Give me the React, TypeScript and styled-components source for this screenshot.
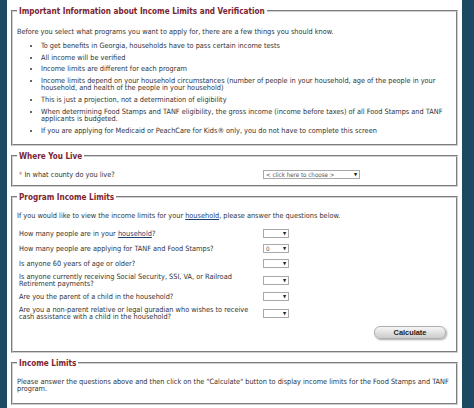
import React from 'react';
import styled, { createGlobalStyle } from 'styled-components';

const GlobalStyle = createGlobalStyle`
  html, body {
    margin: 0;
    padding: 0;
    background: #1d4a63;
  }
  body {
    font-family: "DejaVu Sans Condensed", "DejaVu Sans", sans-serif;
  }
`;

const bullets: string[] = [
  'To get benefits in Georgia, households have to pass certain income tests',
  'All income will be verified',
  'Income limits are different for each program',
  'Income limits depend on your household circumstances (number of people in your household, age of the people in your household, and health of the people in your household)',
  'This is just a projection, not a determination of eligibility',
  'When determining Food Stamps and TANF eligibility, the gross income (income before taxes) of all Food Stamps and TANF applicants is budgeted.',
  'If you are applying for Medicaid or PeachCare for Kids® only, you do not have to complete this screen',
];

interface Question {
  label: React.ReactNode;
  value?: string;
}

const App: React.FC = () => {
  const questions: Question[] = [
    { label: <>How many people are in your <Link>household</Link>?</> },
    { label: 'How many people are applying for TANF and Food Stamps?', value: '0' },
    { label: 'Is anyone 60 years of age or older?' },
    { label: 'Is anyone currently receiving Social Security, SSI, VA, or Railroad Retirement payments?' },
    { label: 'Are you the parent of a child in the household?' },
    { label: 'Are you a non-parent relative or legal guradian who wishes to receive cash assistance with a child in the household?' },
  ];

  return (
    <>
      <GlobalStyle />
      <Page>
        <Content>
          <Section $paddingBottom={5.5}>
            <Legend>Important Information about Income Limits and Verification</Legend>
            <Paragraph $top={12}>
              Before you select what programs you want to apply for, there are a few things you should know.
            </Paragraph>
            <BulletList>
              {bullets.map((b) => (
                <li key={b}>{b}</li>
              ))}
            </BulletList>
          </Section>

          <Section $paddingBottom={6}>
            <Legend>Where You Live</Legend>
            <CountyRow>
              <Label>
                <Required>*</Required> In what county do you live?
              </Label>
              <SelectBox $width={97}>
                <SelectValue>&lt; click here to choose &gt;</SelectValue>
                <Arrow>▼</Arrow>
              </SelectBox>
            </CountyRow>
          </Section>

          <Section $paddingBottom={12}>
            <Legend>Program Income Limits</Legend>
            <Paragraph $top={10}>
              If you would like to view the income limits for your <Link>household</Link>, please answer the questions below.
            </Paragraph>
            <QuestionGrid>
              {questions.map((q, i) => (
                <React.Fragment key={i}>
                  <Label>{q.label}</Label>
                  <SelectBox $width={26}>
                    <SelectValue>{q.value ?? ''}</SelectValue>
                    <Arrow>▼</Arrow>
                  </SelectBox>
                </React.Fragment>
              ))}
            </QuestionGrid>
            <ButtonRow>
              <CalcButton type="button">Calculate</CalcButton>
            </ButtonRow>
          </Section>

          <Section $paddingBottom={10}>
            <Legend>Income Limits</Legend>
            <Paragraph $top={10}>
              Please answer the questions above and then click on the "Calculate" button to display income limits for the Food Stamps and TANF program.
            </Paragraph>
          </Section>
        </Content>
      </Page>
    </>
  );
};

const Page = styled.div`
  display: flex;
  height: 408px;
  padding: 0 12px 0 7px;
  background: #1d4a63;
  overflow: hidden;
`;

const Content = styled.div`
  flex: 1;
  background: #ffffff;
  padding: 6px 4px 0;
  display: flex;
  flex-direction: column;
  gap: 5px;
`;

const Section = styled.fieldset<{ $paddingBottom: number }>`
  margin: 0;
  min-width: 0;
  border: 2px groove #d0d0d0;
  padding: 0 4px ${(p) => p.$paddingBottom}px 4px;
  color: #333333;
  font-size: 7.3px;
  line-height: 7.6px;
`;

const Legend = styled.legend`
  padding: 0 2px;
  margin-left: 0;
  font-family: "DejaVu Sans Condensed", "DejaVu Sans", sans-serif;
  font-weight: bold;
  font-size: 8.1px;
  line-height: 10px;
  color: #7b2431;
`;

const Paragraph = styled.p<{ $top: number }>`
  margin: ${(p) => p.$top}px 0 0;
`;

const BulletList = styled.ul`
  margin: 6.5px 0 0;
  padding-left: 24px;
  list-style: disc;

  li {
    margin-bottom: 4px;
  }
`;

const Link = styled.a`
  color: #1b3f6e;
  text-decoration: underline;
`;

const Label = styled.div`
  color: #333333;
  line-height: 7px;
`;

const Required = styled.span`
  color: #c0504d;
`;

const CountyRow = styled.div`
  display: grid;
  grid-template-columns: 244px auto;
  align-items: center;
  justify-content: start;
  padding: 9.5px 0 0 2px;
`;

const QuestionGrid = styled.div`
  display: grid;
  grid-template-columns: 244px auto;
  grid-auto-rows: minmax(11px, auto);
  row-gap: 4px;
  align-items: center;
  justify-content: start;
  padding: 8px 0 0 2px;
`;

const SelectBox = styled.div<{ $width: number }>`
  display: flex;
  align-items: center;
  justify-content: space-between;
  box-sizing: border-box;
  width: ${(p) => p.$width}px;
  height: 9px;
  padding: 0 2px;
  border: 1px solid #a9a9a9;
  background: #ffffff;
  font-size: 6.2px;
  line-height: 7px;
  color: #555555;
`;

const SelectValue = styled.span`
  white-space: nowrap;
`;

const Arrow = styled.span`
  font-size: 4.5px;
  color: #222222;
`;

const ButtonRow = styled.div`
  display: flex;
  justify-content: flex-end;
  padding: 5.5px 6px 0 0;
`;

const CalcButton = styled.button`
  width: 72px;
  height: 13px;
  padding: 0;
  border: 1px solid #b0b0b0;
  border-radius: 6px;
  background: linear-gradient(#f6f6f6, #cccccc);
  box-shadow: 1px 1px 2px rgba(0, 0, 0, 0.35);
  font-family: "Liberation Sans", Arial, sans-serif;
  font-weight: bold;
  font-size: 7.4px;
  color: #222222;
`;

export default App;
